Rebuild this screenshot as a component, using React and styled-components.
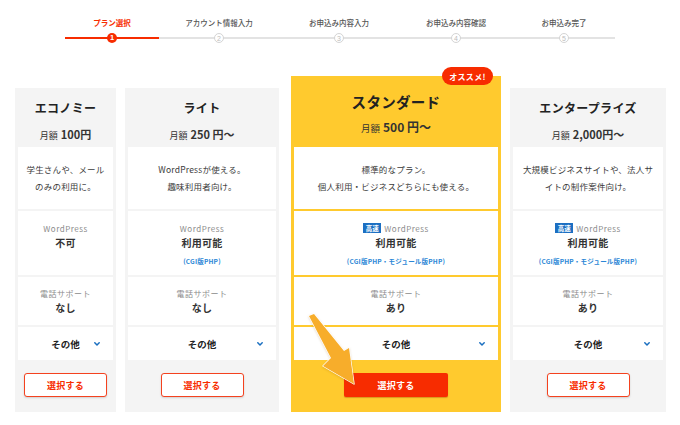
import React from "react";
import styled, { createGlobalStyle, css } from "styled-components";

const GlobalStyle = createGlobalStyle`
  html, body {
    margin: 0;
    padding: 0;
    background: #ffffff;
  }
  body {
    font-family: "Noto Sans CJK JP", "Noto Sans", sans-serif;
    color: #333333;
    -webkit-font-smoothing: antialiased;
  }
  * { box-sizing: border-box; }
`;

const RED = "#f72c00";
const YELLOW = "#ffca2e";
const CARD_GRAY = "#f4f4f4";
const BLUE = "#2a86d6";

const Page = styled.div`
  width: 680px;
  height: 425px;
  overflow: hidden;
  padding-top: 17px;
`;

/* ---------- progress stepper ---------- */

const Stepper = styled.ol`
  list-style: none;
  margin: 0 0 0 65px;
  padding: 0;
  display: grid;
  grid-template-columns: 94px 120px 120px 114px 102px;
  width: 550px;
`;

const Step = styled.li`
  display: flex;
  flex-direction: column;
  align-items: center;
  gap: 4px;
`;

const StepLabel = styled.span`
  font-size: 7.5px;
  line-height: 11px;
  white-space: nowrap;
  font-weight: ${(p) => (p.$active ? 700 : 500)};
  color: ${(p) => (p.$active ? RED : "#555555")};
`;

const StepTrack = styled.div`
  width: 100%;
  height: 12px;
  display: flex;
  justify-content: center;
  align-items: center;
  background: linear-gradient(
      ${(p) => (p.$active ? RED : "#e3e3e3")},
      ${(p) => (p.$active ? RED : "#e3e3e3")}
    )
    center / 100% 2px no-repeat;
`;

const StepDot = styled.span`
  width: 10px;
  height: 10px;
  border-radius: 50%;
  display: flex;
  align-items: center;
  justify-content: center;
  font-family: "Liberation Sans", sans-serif;
  line-height: 1;
  ${(p) =>
    p.$active
      ? css`
          background: ${RED};
          color: #ffffff;
          font-size: 7.5px;
          font-weight: 700;
        `
      : css`
          background: #ffffff;
          border: 1px solid #d4d4d4;
          color: #bdbdbd;
          font-size: 7px;
        `}
`;

/* ---------- plan cards ---------- */

const CardRow = styled.div`
  display: flex;
  align-items: flex-start;
  gap: 9px;
  margin: 32px 0 0 15px;
`;

const Card = styled.section`
  position: relative;
  width: ${(p) => p.$width}px;
  flex: none;
  padding: 0 3px;
  display: flex;
  flex-direction: column;
  background: ${(p) => (p.$featured ? YELLOW : CARD_GRAY)};
  margin-top: ${(p) => (p.$featured ? 0 : 12)}px;
  margin-left: ${(p) => (p.$featured ? 3 : 0)}px;
`;

const Badge = styled.span`
  position: absolute;
  top: -9px;
  right: 8px;
  width: 51px;
  height: 18px;
  border-radius: 9px;
  background: ${RED};
  color: #ffffff;
  font-size: 8px;
  font-weight: 700;
  display: flex;
  align-items: center;
  justify-content: center;
  letter-spacing: 0.3px;
`;

const Header = styled.header`
  display: flex;
  flex-direction: column;
  align-items: center;
  height: ${(p) => (p.$featured ? 71 : 59)}px;
  padding-top: ${(p) => (p.$featured ? 17 : 13)}px;
  gap: ${(p) => (p.$featured ? 6 : 10)}px;
`;

const PlanName = styled.h2`
  margin: 0;
  font-size: ${(p) => (p.$featured ? 14.5 : 12)}px;
  line-height: ${(p) => (p.$featured ? 18 : 14)}px;
  font-weight: 700;
  color: #222222;
  letter-spacing: 0.3px;
  white-space: nowrap;
`;

const Price = styled.p`
  margin: 0;
  line-height: ${(p) => (p.$featured ? 16 : 14)}px;
  white-space: nowrap;
  color: #333333;
`;

const PriceLead = styled.span`
  font-size: ${(p) => (p.$featured ? 9.5 : 9)}px;
  margin-right: 3px;
`;

const PriceValue = styled.span`
  font-size: ${(p) => (p.$featured ? 12 : 11)}px;
  font-weight: 700;
`;

const Body = styled.div`
  display: flex;
  flex-direction: column;
  gap: 2px;
`;

const Panel = styled.div`
  background: #ffffff;
  height: ${(p) => p.$height}px;
  display: flex;
  flex-direction: column;
  align-items: center;
`;

const Description = styled(Panel)`
  justify-content: center;
  text-align: center;
  font-size: 8.5px;
  line-height: 17px;
  letter-spacing: 0.2px;
  color: #3a3a3a;
  white-space: nowrap;
`;

const Spec = styled(Panel)`
  padding-top: ${(p) => p.$pad}px;
`;

const SpecLabel = styled.div`
  display: flex;
  align-items: center;
  gap: 3px;
  height: 10px;
  font-size: 8px;
  letter-spacing: 0.5px;
  color: #8c8c8c;
  white-space: nowrap;
`;

const FastTag = styled.span`
  background: #1c6fc2;
  color: #ffffff;
  font-size: 6.5px;
  font-weight: 700;
  letter-spacing: 0;
  line-height: 10px;
  padding: 0 2.5px;
`;

const SpecValue = styled.div`
  margin-top: 4px;
  font-size: 10px;
  line-height: 12px;
  font-weight: 700;
  color: #333333;
  letter-spacing: 0.3px;
`;

const SpecNote = styled.div`
  margin-top: 8px;
  font-size: 6.5px;
  line-height: 8px;
  font-weight: 700;
  color: ${BLUE};
  letter-spacing: 0.2px;
  white-space: nowrap;
`;

const MoreRow = styled.button`
  all: unset;
  background: #ffffff;
  height: 33px;
  display: grid;
  grid-template-columns: 1fr auto 1fr;
  align-items: center;
  padding: 0 13px;
  font-family: inherit;
  cursor: pointer;
`;

const MoreText = styled.span`
  grid-column: 2;
  font-size: 9.5px;
  font-weight: 700;
  color: #222222;
`;

const Chevron = styled.svg`
  grid-column: 3;
  justify-self: end;
  width: 6px;
  height: 4px;
`;

const Footer = styled.div`
  height: 52px;
  display: flex;
  justify-content: center;
  padding-top: 13px;
`;

const SelectButton = styled.button`
  height: 24px;
  font-family: inherit;
  font-size: 9px;
  font-weight: 700;
  letter-spacing: 0.3px;
  cursor: pointer;
  ${(p) =>
    p.$primary
      ? css`
          width: 104px;
          border: none;
          border-radius: 2px;
          background: ${RED};
          color: #ffffff;
          box-shadow: 0 1px 1px rgba(150, 60, 0, 0.35);
        `
      : css`
          width: 83px;
          border: 1.5px solid #f4421f;
          border-radius: 3px;
          background: #ffffff;
          color: ${RED};
          box-shadow: 0 1px 2px rgba(0, 0, 0, 0.15);
        `}
`;

const Pointer = styled.svg`
  position: absolute;
  left: 14px;
  top: 234px;
  width: 56px;
  height: 80px;
  pointer-events: none;
  filter: drop-shadow(0 1px 1px rgba(140, 80, 0, 0.2));
`;

const steps = [
  "プラン選択",
  "アカウント情報入力",
  "お申込み内容入力",
  "お申込み内容確認",
  "お申込み完了",
];

const plans = [
  {
    name: "エコノミー",
    price: "100円",
    width: 101,
    desc: ["学生さんや、メール", "のみの利用に。"],
    wp: "不可",
    phone: "なし",
  },
  {
    name: "ライト",
    price: "250 円〜",
    width: 154,
    desc: ["WordPressが使える。", "趣味利用者向け。"],
    wp: "利用可能",
    note: "(CGI版PHP)",
    phone: "なし",
  },
  {
    name: "スタンダード",
    price: "500 円〜",
    width: 210,
    featured: true,
    desc: ["標準的なプラン。", "個人利用・ビジネスどちらにも使える。"],
    fast: true,
    wp: "利用可能",
    note: "(CGI版PHP・モジュール版PHP)",
    phone: "あり",
  },
  {
    name: "エンタープライズ",
    price: "2,000円〜",
    width: 156,
    desc: ["大規模ビジネスサイトや、法人サ", "イトの制作案件向け。"],
    fast: true,
    wp: "利用可能",
    note: "(CGI版PHP・モジュール版PHP)",
    phone: "あり",
  },
];

function PlanCard({ plan }) {
  const f = !!plan.featured;
  return (
    <Card $width={plan.width} $featured={f}>
      {f && <Badge>オススメ!</Badge>}
      <Header $featured={f}>
        <PlanName $featured={f}>{plan.name}</PlanName>
        <Price $featured={f}>
          <PriceLead $featured={f}>月額</PriceLead>
          <PriceValue $featured={f}>{plan.price}</PriceValue>
        </Price>
      </Header>
      <Body>
        <Description $height={62}>
          {plan.desc.map((line) => (
            <div key={line}>{line}</div>
          ))}
        </Description>
        <Spec $height={64} $pad={12}>
          <SpecLabel>
            {plan.fast && <FastTag>高速</FastTag>}
            WordPress
          </SpecLabel>
          <SpecValue>{plan.wp}</SpecValue>
          {plan.note && <SpecNote>{plan.note}</SpecNote>}
        </Spec>
        <Spec $height={48} $pad={11}>
          <SpecLabel>電話サポート</SpecLabel>
          <SpecValue>{plan.phone}</SpecValue>
        </Spec>
        <MoreRow type="button">
          <MoreText>その他</MoreText>
          <Chevron viewBox="0 0 6 4">
            <path
              d="M0.8 0.8 L3 3 L5.2 0.8"
              fill="none"
              stroke="#1a6fc0"
              strokeWidth="1.5"
              strokeLinecap="round"
              strokeLinejoin="round"
            />
          </Chevron>
        </MoreRow>
      </Body>
      <Footer>
        <SelectButton type="button" $primary={f}>
          選択する
        </SelectButton>
      </Footer>
      {f && (
        <Pointer viewBox="0 0 56 80">
          <path
            d="M4 6 L9 4 L39 41 L44 38 L49 74 L18 56 L26 48 Z"
            fill="#f7ad2b"
            stroke="#ffffff"
            strokeWidth="1.4"
            strokeLinejoin="round"
            paintOrder="stroke"
          />
        </Pointer>
      )}
    </Card>
  );
}

export default function App() {
  return (
    <Page>
      <GlobalStyle />
      <Stepper>
        {steps.map((label, i) => (
          <Step key={label}>
            <StepLabel $active={i === 0}>{label}</StepLabel>
            <StepTrack $active={i === 0}>
              <StepDot $active={i === 0}>{i + 1}</StepDot>
            </StepTrack>
          </Step>
        ))}
      </Stepper>
      <CardRow>
        {plans.map((plan) => (
          <PlanCard key={plan.name} plan={plan} />
        ))}
      </CardRow>
    </Page>
  );
}
